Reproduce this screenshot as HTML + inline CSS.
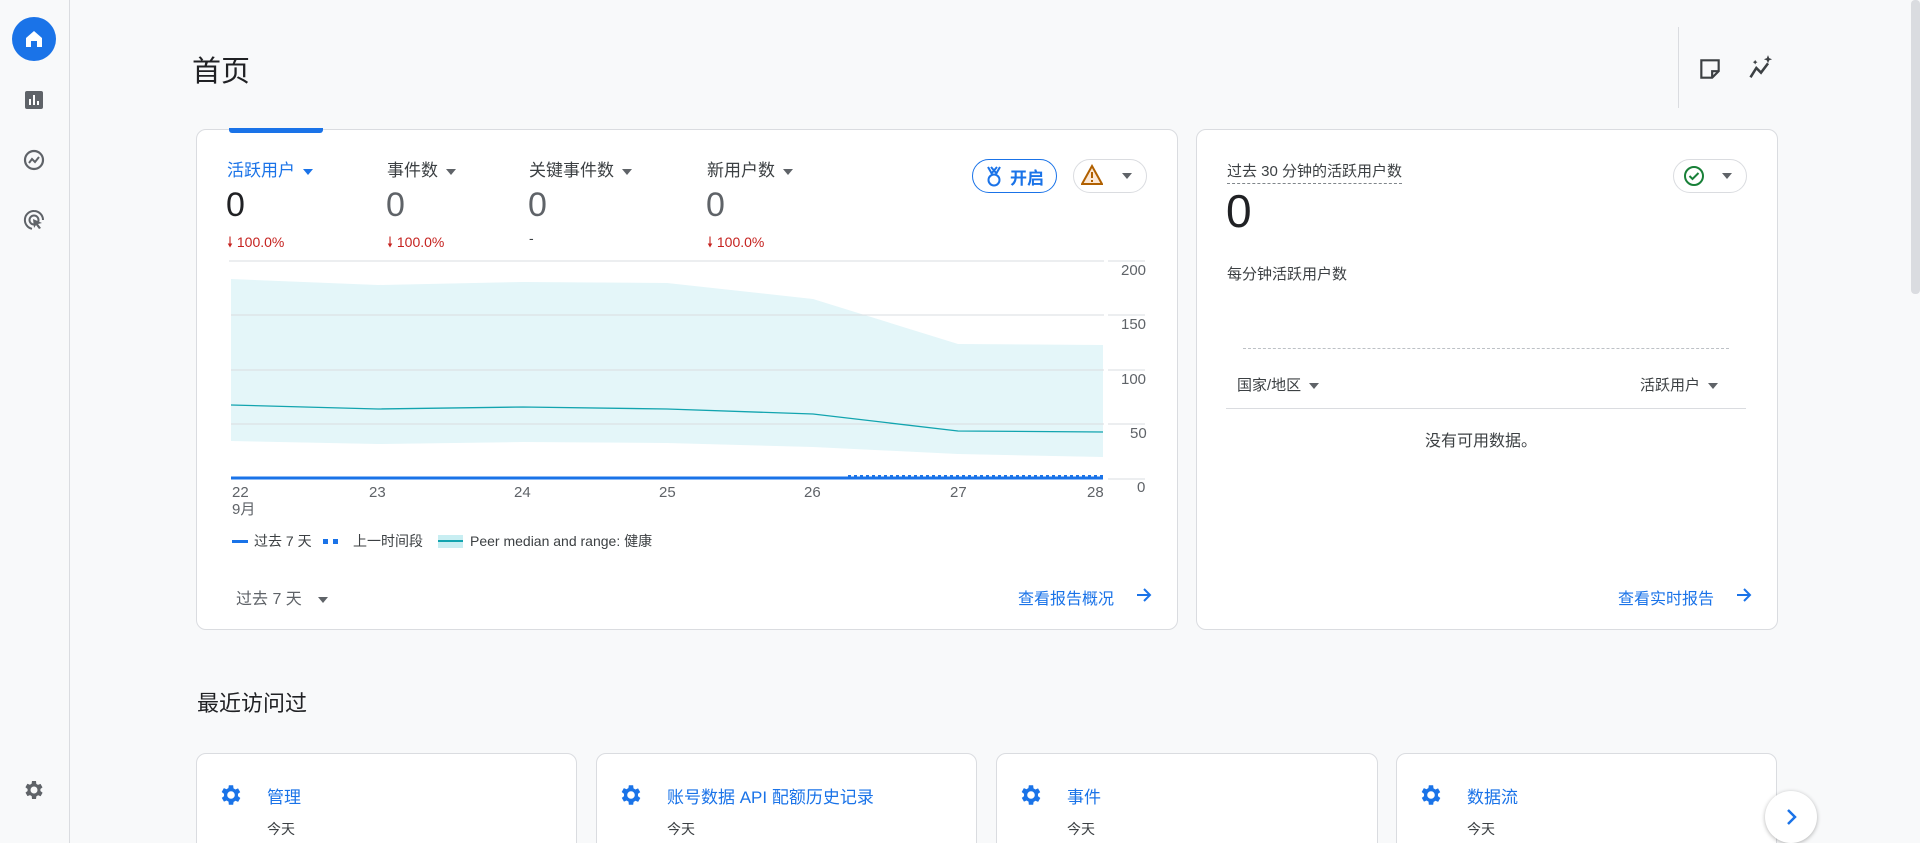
<!DOCTYPE html>
<html><head><meta charset="utf-8"><style>
*{margin:0;padding:0;box-sizing:border-box}
html{width:1920px;height:843px;overflow:hidden}
body{width:1920px;height:843px;overflow:hidden;background:#f8f9fa;font-family:"Liberation Sans","Noto Sans CJK SC",sans-serif;color:#202124;position:relative}
.a{position:absolute;white-space:nowrap}
.side{position:absolute;left:0;top:0;width:70px;height:843px;border-right:1px solid #dadce0;background:#f8f9fa}
.card{position:absolute;background:#fff;border:1px solid #dadce0;border-radius:10px}
.lbl{font-size:17px;color:#3c4043}
.val{font-size:34px;color:#202124}
.pct{font-size:14px;color:#c5221f}
.tri{display:inline-block;width:0;height:0;border-left:5px solid transparent;border-right:5px solid transparent;border-top:6px solid #5f6368;vertical-align:middle;margin-left:8px}
.ax{font-size:15px;color:#5f6368}
.link{font-size:16px;color:#1a73e8}
.pill{position:absolute;border:1px solid #dadce0;border-radius:18px;background:#fff}
</style></head><body>
<div class="side">
 <div class="a" style="left:12px;top:17px;width:44px;height:44px;border-radius:50%;background:#1a73e8"></div>
 <svg class="a" style="left:22px;top:27px" width="24" height="24" viewBox="0 0 24 24"><path d="M4 11L12 4l8 7v9h-5v-6h-6v6H4z" fill="#fff"/></svg>
 <svg class="a" style="left:22px;top:88px" width="24" height="24" viewBox="0 0 24 24"><rect x="3" y="3" width="18" height="18" rx="2" fill="#5f6368"/><rect x="7" y="11" width="2" height="6" fill="#fff"/><rect x="11" y="7" width="2" height="10" fill="#fff"/><rect x="15" y="13" width="2" height="4" fill="#fff"/></svg>
 <svg class="a" style="left:22px;top:148px" width="24" height="24" viewBox="0 0 24 24"><circle cx="12" cy="12" r="9" fill="none" stroke="#5f6368" stroke-width="2.2"/><path d="M7 15l3-4 3 3 4-5" fill="none" stroke="#5f6368" stroke-width="2"/></svg>
 <svg class="a" style="left:22px;top:208px" width="24" height="24" viewBox="0 0 24 24"><path d="M12 3a9 9 0 0 0-2 17.8M21 12a9 9 0 0 0-9-9" fill="none" stroke="#5f6368" stroke-width="2"/><circle cx="12" cy="12" r="4.5" fill="none" stroke="#5f6368" stroke-width="2"/><path d="M11 11l9 4-4 1 3 4-2 1-3-4-2 3z" fill="#5f6368"/></svg>
 <svg class="a" style="left:22px;top:778px" width="24" height="24" viewBox="0 0 24 24"><path fill="#5f6368" d="M19.4 13a7.5 7.5 0 0 0 0-2l2.1-1.6-2-3.5-2.5 1a7 7 0 0 0-1.7-1L15 3h-4l-.4 2.7a7 7 0 0 0-1.7 1l-2.5-1-2 3.5L6.6 11a7.5 7.5 0 0 0 0 2l-2.1 1.6 2 3.5 2.5-1a7 7 0 0 0 1.7 1L11 21h4l.4-2.7a7 7 0 0 0 1.7-1l2.5 1 2-3.5zM13 15.5a3.5 3.5 0 1 1 0-7 3.5 3.5 0 0 1 0 7z" transform="translate(-1 0)"/></svg>
</div>
<div class="a" style="left:192px;top:48px;font-size:29px">首页</div>
<div class="a" style="left:1678px;top:27px;width:1px;height:81px;background:#dadce0"></div>
<svg class="a" style="left:1697px;top:56px" width="26" height="26" viewBox="0 0 24 24"><path d="M4 4h16v10l-6 6H4z" fill="none" stroke="#3c4043" stroke-width="2"/><path d="M14 20v-6h6" fill="none" stroke="#3c4043" stroke-width="2"/></svg>
<svg class="a" style="left:1747px;top:54px" width="28" height="28" viewBox="0 0 24 24"><path d="M3 20l5-8 4 4 6-8" fill="none" stroke="#3c4043" stroke-width="2.2"/><path d="M18 1l1 2.5 2.5 1-2.5 1-1 2.5-1-2.5-2.5-1 2.5-1zM7 5l.7 1.3L9 7l-1.3.7L7 9l-.7-1.3L5 7l1.3-.7z" fill="#3c4043"/></svg>
<div class="a" style="left:1911px;top:0;width:9px;height:294px;background:#dadce0;border-radius:4px"></div>

<div class="card" style="left:196px;top:129px;width:982px;height:501px"></div>
<div class="a" style="left:229px;top:128px;width:94px;height:5px;background:#1a73e8;border-radius:0 0 3px 3px"></div>
<div class="a lbl" style="left:227px;top:156px;color:#1a73e8">活跃用户<span class="tri" style="border-top-color:#1a73e8"></span></div>
<div class="a lbl" style="left:387px;top:156px">事件数<span class="tri"></span></div>
<div class="a lbl" style="left:529px;top:156px">关键事件数<span class="tri"></span></div>
<div class="a lbl" style="left:707px;top:156px">新用户数<span class="tri"></span></div>
<div class="a val" style="left:226px;top:186px">0</div>
<div class="a val" style="left:386px;top:186px;color:#5f6368">0</div>
<div class="a val" style="left:528px;top:186px;color:#5f6368">0</div>
<div class="a val" style="left:706px;top:186px;color:#5f6368">0</div>
<div class="a pct" style="left:227px;top:232px">🠗 100.0%</div>
<div class="a pct" style="left:387px;top:232px">🠗 100.0%</div>
<div class="a pct" style="left:529px;top:230px;color:#3c4043">-</div>
<div class="a pct" style="left:707px;top:232px">🠗 100.0%</div>
<div class="pill" style="left:972px;top:159px;width:85px;height:34px;border-color:#1a73e8"></div>
<svg class="a" style="left:984px;top:165px" width="20" height="22" viewBox="0 0 20 22"><path d="M4 2l4 7M16 2l-4 7M7 2l6 7M13 2l-6 7" stroke="#1a73e8" stroke-width="2" fill="none"/><circle cx="10" cy="15" r="5.5" fill="none" stroke="#1a73e8" stroke-width="2"/></svg>
<div class="a" style="left:1010px;top:164px;font-size:17px;color:#1a73e8;font-weight:bold">开启</div>
<div class="pill" style="left:1073px;top:159px;width:74px;height:34px"></div>
<svg class="a" style="left:1081px;top:164px" width="22" height="22" viewBox="0 0 22 22"><path d="M11 2L21 20H1z" fill="#fce8d6" stroke="#b06000" stroke-width="2"/><rect x="10" y="8" width="2" height="6" fill="#b06000"/><rect x="10" y="16" width="2" height="2" fill="#b06000"/></svg>
<span class="a tri" style="left:1114px;top:173px"></span>

<svg class="a" style="left:0;top:0" width="1200" height="560">
 <path d="M231 279L378 285L523 282L667 283L813 299L958 344L1103 345L1103 457L958 454L813 447L667 443L523 442L378 444L231 441Z" fill="#e4f6f9"/>
 <g stroke="#dadce0" stroke-width="1"><line x1="229" y1="261" x2="1104" y2="261"/><line x1="231" y1="315" x2="1104" y2="315"/><line x1="231" y1="370" x2="1104" y2="370"/><line x1="231" y1="424" x2="1104" y2="424"/><line x1="1108" y1="261" x2="1145" y2="261"/><line x1="1108" y1="315" x2="1145" y2="315"/><line x1="1108" y1="370" x2="1145" y2="370"/><line x1="1108" y1="424" x2="1145" y2="424"/><line x1="1108" y1="479" x2="1145" y2="479"/></g>
 <polyline points="231,405 378,409 523,407 667,409 813,414 958,431 1103,432" fill="none" stroke="#12a4af" stroke-width="1.3"/>
 <line x1="848" y1="476" x2="1103" y2="476" stroke="#1a73e8" stroke-width="2" stroke-dasharray="3,3"/>
 <line x1="231" y1="478" x2="1103" y2="478" stroke="#1a73e8" stroke-width="3"/>
</svg>
<div class="a ax" style="left:1121px;top:262px">200</div>
<div class="a ax" style="left:1121px;top:316px">150</div>
<div class="a ax" style="left:1121px;top:371px">100</div>
<div class="a ax" style="left:1130px;top:425px">50</div>
<div class="a ax" style="left:1137px;top:479px">0</div>
<div class="a ax" style="left:232px;top:484px">22</div>
<div class="a ax" style="left:232px;top:498px">9月</div>
<div class="a ax" style="left:369px;top:484px">23</div>
<div class="a ax" style="left:514px;top:484px">24</div>
<div class="a ax" style="left:659px;top:484px">25</div>
<div class="a ax" style="left:804px;top:484px">26</div>
<div class="a ax" style="left:950px;top:484px">27</div>
<div class="a ax" style="left:1087px;top:484px">28</div>
<div class="a" style="left:232px;top:540px;width:16px;height:3px;background:#1a73e8"></div>
<div class="a" style="left:254px;top:531px;font-size:14px;color:#3c4043">过去 7 天</div>
<div class="a" style="left:323px;top:539px;width:5px;height:5px;background:#1a73e8"></div>
<div class="a" style="left:333px;top:539px;width:5px;height:5px;background:#1a73e8"></div>
<div class="a" style="left:353px;top:531px;font-size:14px;color:#3c4043">上一时间段</div>
<div class="a" style="left:438px;top:535px;width:25px;height:13px;background:#c8eef2"></div>
<div class="a" style="left:438px;top:540px;width:25px;height:2px;background:#12a4af"></div>
<div class="a" style="left:470px;top:531px;font-size:14px;color:#3c4043">Peer median and range: 健康</div>
<div class="a" style="left:236px;top:585px;font-size:16px;color:#5f6368">过去 7 天<span class="tri" style="margin-left:16px"></span></div>
<div class="a link" style="left:1018px;top:585px">查看报告概况</div>
<svg class="a" style="left:1134px;top:585px" width="20" height="20" viewBox="0 0 20 20"><path d="M3 10h13M10 4l6 6-6 6" fill="none" stroke="#1a73e8" stroke-width="2"/></svg>

<div class="card" style="left:1196px;top:129px;width:582px;height:501px"></div>
<div class="a" style="left:1227px;top:160px;font-size:15px;color:#3c4043;border-bottom:1.5px dashed #80868b;padding-bottom:2px">过去 30 分钟的活跃用户数</div>
<div class="a" style="left:1226px;top:184px;font-size:46px">0</div>
<div class="pill" style="left:1673px;top:159px;width:74px;height:34px"></div>
<svg class="a" style="left:1683px;top:165px" width="22" height="22" viewBox="0 0 22 22"><circle cx="11" cy="11" r="9" fill="none" stroke="#188038" stroke-width="2"/><path d="M6.5 11l3 3 6-6" fill="none" stroke="#188038" stroke-width="2"/></svg>
<span class="a tri" style="left:1714px;top:173px"></span>
<div class="a" style="left:1227px;top:263px;font-size:15px;color:#3c4043">每分钟活跃用户数</div>
<div class="a" style="left:1243px;top:348px;width:486px;border-top:1px dashed #bdc1c6"></div>
<div class="a" style="left:1237px;top:374px;font-size:15px;color:#3c4043">国家/地区<span class="tri"></span></div>
<div class="a" style="left:1640px;top:374px;font-size:15px;color:#3c4043">活跃用户<span class="tri"></span></div>
<div class="a" style="left:1226px;top:408px;width:520px;height:1px;background:#dadce0"></div>
<div class="a" style="left:1425px;top:427px;font-size:16px;color:#3c4043">没有可用数据。</div>
<div class="a link" style="left:1618px;top:585px">查看实时报告</div>
<svg class="a" style="left:1734px;top:585px" width="20" height="20" viewBox="0 0 20 20"><path d="M3 10h13M10 4l6 6-6 6" fill="none" stroke="#1a73e8" stroke-width="2"/></svg>

<div class="a" style="left:197px;top:686px;font-size:22px">最近访问过</div>
<div class="card" style="left:196px;top:753px;width:381px;height:100px"></div>
<div class="card" style="left:596px;top:753px;width:381px;height:100px"></div>
<div class="card" style="left:996px;top:753px;width:382px;height:100px"></div>
<div class="card" style="left:1396px;top:753px;width:381px;height:100px"></div>
<svg width="0" height="0" style="position:absolute"><defs><symbol id="g" viewBox="0 0 24 24"><path fill="#1a73e8" d="M19.4 13a7.5 7.5 0 0 0 0-2l2.1-1.6-2-3.5-2.5 1a7 7 0 0 0-1.7-1L15 3h-4l-.4 2.7a7 7 0 0 0-1.7 1l-2.5-1-2 3.5L6.6 11a7.5 7.5 0 0 0 0 2l-2.1 1.6 2 3.5 2.5-1a7 7 0 0 0 1.7 1L11 21h4l.4-2.7a7 7 0 0 0 1.7-1l2.5 1 2-3.5zM13 15.5a3.5 3.5 0 1 1 0-7 3.5 3.5 0 0 1 0 7z" transform="translate(-1 0)"/></symbol></defs></svg>
<svg class="a" style="left:218px;top:782px" width="26" height="26"><use href="#g"/></svg>
<svg class="a" style="left:618px;top:782px" width="26" height="26"><use href="#g"/></svg>
<svg class="a" style="left:1018px;top:782px" width="26" height="26"><use href="#g"/></svg>
<svg class="a" style="left:1418px;top:782px" width="26" height="26"><use href="#g"/></svg>
<div class="a link" style="left:267px;top:783px;font-size:17px">管理</div>
<div class="a link" style="left:667px;top:783px;font-size:17px">账号数据 API 配额历史记录</div>
<div class="a link" style="left:1067px;top:783px;font-size:17px">事件</div>
<div class="a link" style="left:1467px;top:783px;font-size:17px">数据流</div>
<div class="a" style="left:267px;top:819px;font-size:14px;color:#3c4043">今天</div>
<div class="a" style="left:667px;top:819px;font-size:14px;color:#3c4043">今天</div>
<div class="a" style="left:1067px;top:819px;font-size:14px;color:#3c4043">今天</div>
<div class="a" style="left:1467px;top:819px;font-size:14px;color:#3c4043">今天</div>
<div class="a" style="left:1765px;top:791px;width:52px;height:52px;border-radius:50%;background:#fff;box-shadow:0 1px 4px rgba(0,0,0,.3)"></div>
<svg class="a" style="left:1779px;top:805px" width="24" height="24" viewBox="0 0 24 24"><path d="M9 5l7 7-7 7" fill="none" stroke="#1a73e8" stroke-width="2.5"/></svg>
</body></html>
